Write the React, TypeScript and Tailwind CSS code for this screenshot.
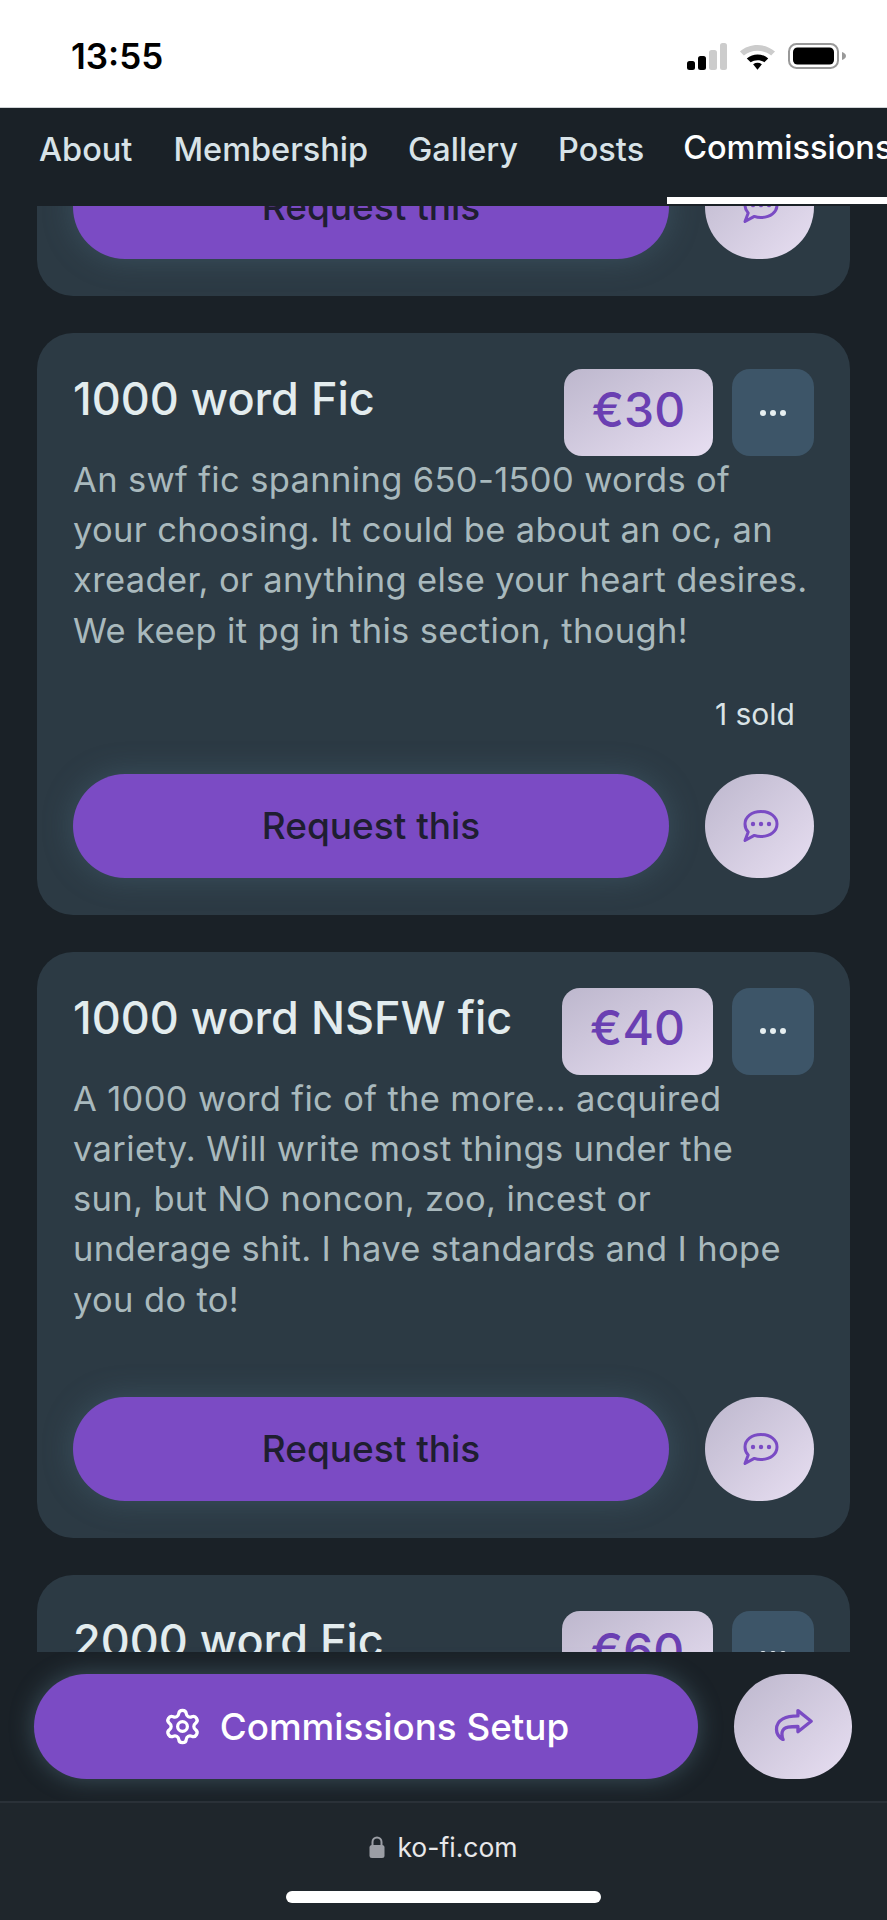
import { Settings } from "lucide-react";

const font = "font-['Inter',sans-serif]";

function Chat() {
  return (
    <svg width="38" height="34" viewBox="0 0 38 34" fill="none">
      <path
        d="M20 2.500C29.500 2.500 36 8 36 15S29.500 27.500 20 27.500c-2.500 0-4.700-.4-6.700-1.100L4 31.500l3.200-8.500C5 20.700 4 18 4 15 4 8 10.500 2.500 20 2.500Z"
        stroke="#7a4bc4"
        strokeWidth="3"
        strokeLinejoin="round"
      />
      <circle cx="12" cy="15" r="2.200" fill="#7a4bc4" />
      <circle cx="20" cy="15" r="2.200" fill="#7a4bc4" />
      <circle cx="28" cy="15" r="2.200" fill="#7a4bc4" />
    </svg>
  );
}

function Share() {
  return (
    <svg width="40" height="33" viewBox="0 0 120 100" fill="none" className="mt-[-5px]">
      <path
        d="M115 40 75 8v16C40 24 10 35 10 65c0 15 10 25 20 31-6-16-6-34 15-38 10-2 20-2 30-2v16Z"
        stroke="#7a4bc4"
        strokeWidth="10"
        strokeLinejoin="round"
      />
    </svg>
  );
}

function RequestRow() {
  return (
    <div className="flex items-center gap-[36px]">
      <button className="flex h-[104px] w-[596px] items-center justify-center rounded-full bg-[#7b4bc4] text-[37px] font-medium text-[#1f1e31] shadow-[0_0_30px_rgba(80,115,135,0.4)]">
        Request this
      </button>
      <div className="flex h-[104px] w-[109px] items-center justify-center rounded-full bg-gradient-to-br from-[#bdb7cd] to-[#e8dff2]">
        <Chat />
      </div>
    </div>
  );
}

function Card({ title, price, lines, sold, priceW }: { title: string; price: string; lines: string[]; sold?: boolean; priceW: string }) {
  return (
    <div className="rounded-[36px] bg-[#2c3a44] px-[36px] pt-[36px] pb-[37px]">
      <div className="flex items-start justify-between">
        <div className="text-[45px] leading-[60px] font-medium text-[#e3ecee]">{title}</div>
        <div className="flex gap-[19px]">
          <div className={`flex h-[87px] items-center justify-center rounded-[18px] bg-gradient-to-br from-[#bdb7cd] to-[#e8dff2] pb-[6px] text-[48px] font-medium text-[#6a3fb2] ${priceW}`}>
            {price}
          </div>
          <div className="flex h-[87px] w-[82px] items-center justify-center gap-[4px] rounded-[18px] bg-[#3d5568]">
            <span className="size-[6px] rounded-full bg-[#e6eef0]" />
            <span className="size-[6px] rounded-full bg-[#e6eef0]" />
            <span className="size-[6px] rounded-full bg-[#e6eef0]" />
          </div>
        </div>
      </div>
      <div className="mt-[-1px] text-[34.500px] leading-[50.200px] tracking-[0.35px] text-[#a9b9bd]">
        {lines.map((l) => (
          <div key={l} className="whitespace-nowrap">{l}</div>
        ))}
      </div>
      {sold ? (
        <div className="mt-[40px] pr-[19px] text-right text-[30px] leading-[36px] text-[#d9e3e6]">1 sold</div>
      ) : (
        <div className="h-[30px]" />
      )}
      <div className="mt-[42px]">
        <RequestRow />
      </div>
    </div>
  );
}

export default function App() {
  return (
    <div className={`flex h-[1920px] w-[887px] flex-col overflow-hidden bg-[#1a2127] ${font}`}>
      <div className="flex h-[107px] shrink-0 items-center justify-between bg-white pt-[6px] pr-[41px] pl-[71px]">
        <span className="text-[35px] leading-none font-semibold text-black">13:55</span>
        <div className="mt-[-1px] flex items-center gap-[12px]">
          <svg width="40" height="27" viewBox="0 0 40 27">
            <rect x="0" y="18" width="8" height="9" rx="2.500" fill="#000" />
            <rect x="11" y="13" width="8" height="14" rx="2.500" fill="#000" />
            <rect x="22" y="7" width="8" height="20" rx="2.500" fill="#ccc" />
            <rect x="33" y="0" width="7" height="27" rx="2.500" fill="#ccc" />
          </svg>
          <svg width="37" height="28" viewBox="0 0 38 28">
            <path d="M1 9.500C10.500 0.500 27.500 0.500 37 9.500l-4 4C25.500 7 12.500 7 5 13.500Z" fill="#ccc" />
            <path d="M8 16.500c6.500-5.500 15.500-5.500 22 0l-4 4c-4-3-10-3-14 0Z" fill="#000" />
            <path d="M14.500 22.500c3-2 6-2 9 0L19 28Z" fill="#000" />
          </svg>
          <svg width="58" height="26" viewBox="0 0 58 26">
            <rect x="1" y="1" width="49" height="24" rx="7.500" fill="none" stroke="#999" strokeWidth="2" />
            <rect x="5" y="4.500" width="41" height="17" rx="4.500" fill="#000" />
            <path d="M54 9c2.500 .8 4 2.300 4 4s-1.500 3.200-4 4Z" fill="#999" />
          </svg>
        </div>
      </div>

      <nav className="relative z-10 flex h-[99px] shrink-0 items-start overflow-hidden border-t border-[#cfd3d6] bg-[#1a2127] pl-[39px] text-[32.500px] font-medium text-[#d8e3e8]">
        <span className="mt-[18px] mr-[41px]">About</span>
        <span className="mt-[18px] mr-[40px]">Membership</span>
        <span className="mt-[18px] mr-[40px]">Gallery</span>
        <span className="mt-[18px] mr-[23px]">Posts</span>
        <span className="flex h-[96px] flex-1 border-b-[7px] border-white pt-[16px] pl-[16px] whitespace-nowrap text-white">Commissions</span>
      </nav>

      <div className="h-0 flex-1 overflow-hidden px-[37px]">
        <div className="mt-[-88px] flex flex-col gap-[37px]">
          <div className="rounded-[36px] bg-[#2c3a44] px-[36px] pt-[37px] pb-[37px]">
            <RequestRow />
          </div>
          <Card
            title="1000 word Fic"
            price="€30"
            priceW="w-[149px]"
            sold
            lines={[
              "An swf fic spanning 650-1500 words of",
              "your choosing. It could be about an oc, an",
              "xreader, or anything else your heart desires.",
              "We keep it pg in this section, though!",
            ]}
          />
          <Card
            title="1000 word NSFW fic"
            price="€40"
            priceW="w-[151px]"
            lines={[
              "A 1000 word fic of the more... acquired",
              "variety. Will write most things under the",
              "sun, but NO noncon, zoo, incest or",
              "underage shit. I have standards and I hope",
              "you do to!",
            ]}
          />
          <Card title="2000 word Fic" price="€60" priceW="w-[151px]" lines={[]} />
        </div>
      </div>

      <div className="flex h-[149px] shrink-0 items-start gap-[36px] pt-[22px] pl-[34px]">
        <button className="flex h-[105px] w-[664px] items-center justify-center gap-[18px] rounded-full bg-[#7b4bc4] text-[36.800px] font-medium text-white shadow-[0_0_24px_rgba(110,150,170,0.4)]">
          <Settings size={39} strokeWidth={2} />
          Commissions Setup
        </button>
        <div className="flex h-[105px] w-[118px] items-center justify-center rounded-full bg-gradient-to-br from-[#bdb7cd] to-[#e8dff2]">
          <Share />
        </div>
      </div>

      <div className="flex h-[119px] shrink-0 flex-col items-center border-t-[2px] border-[#2a3138] bg-[#1f262c]">
        <div className="mt-[28px] flex items-center gap-[12px] text-[26.500px] leading-[32px] text-[#e8e8ea]">
          <svg width="16" height="22" viewBox="0 0 16 22">
            <path d="M3.500 10V6a4.500 4.500 0 0 1 9 0v4" fill="none" stroke="#9b9ea5" strokeWidth="2" />
            <rect x="0.500" y="9" width="15" height="13" rx="2.500" fill="#9b9ea5" />
          </svg>
          ko-fi.com
        </div>
        <div className="mt-[28px] h-[12px] w-[315px] rounded-full bg-white" />
      </div>
    </div>
  );
}
